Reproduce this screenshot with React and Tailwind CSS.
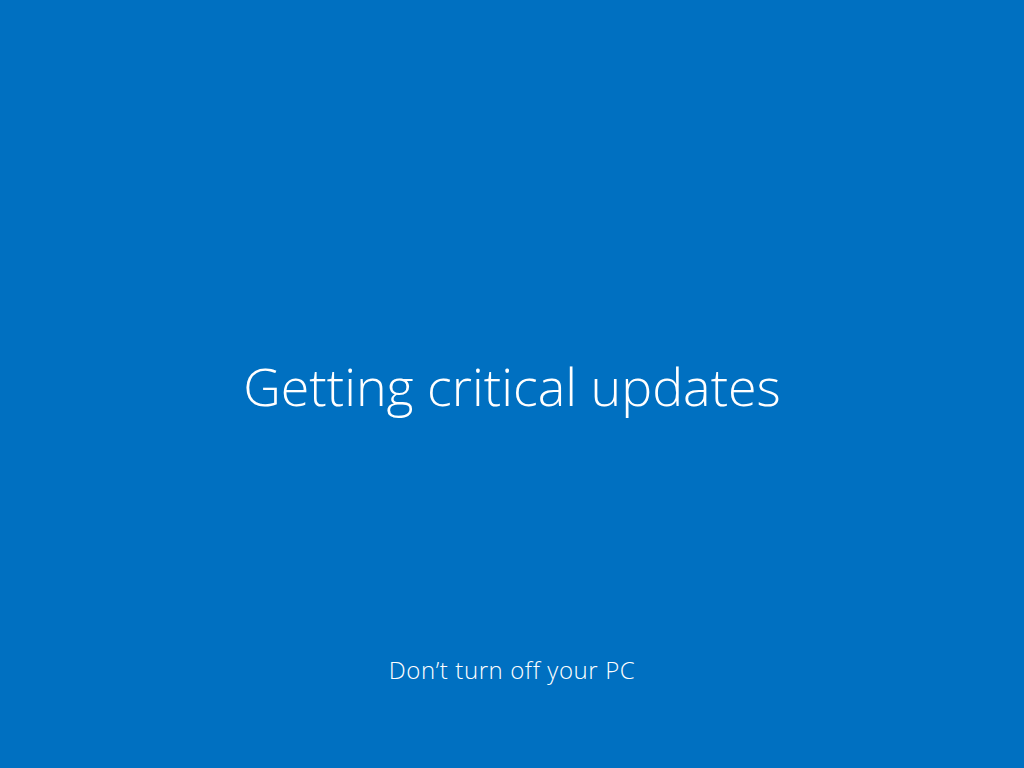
const App = () => {
  return (
    <div
      className="flex h-screen w-screen flex-col items-center bg-[#0070c1] text-white select-none"
      style={{ fontFamily: '"Open Sans", "Noto Sans", sans-serif' }}
    >
      {/* ── Título ── */}
      <h1 className="mt-[360px] text-[52px] font-light leading-none">
        Getting critical updates
      </h1>

      {/* ── Aviso inferior ── */}
      <p className="mt-[246px] text-[24px] font-light leading-none tracking-[0.6px]">
        Don’t turn off your PC
      </p>
    </div>
  );
};

export default App;
